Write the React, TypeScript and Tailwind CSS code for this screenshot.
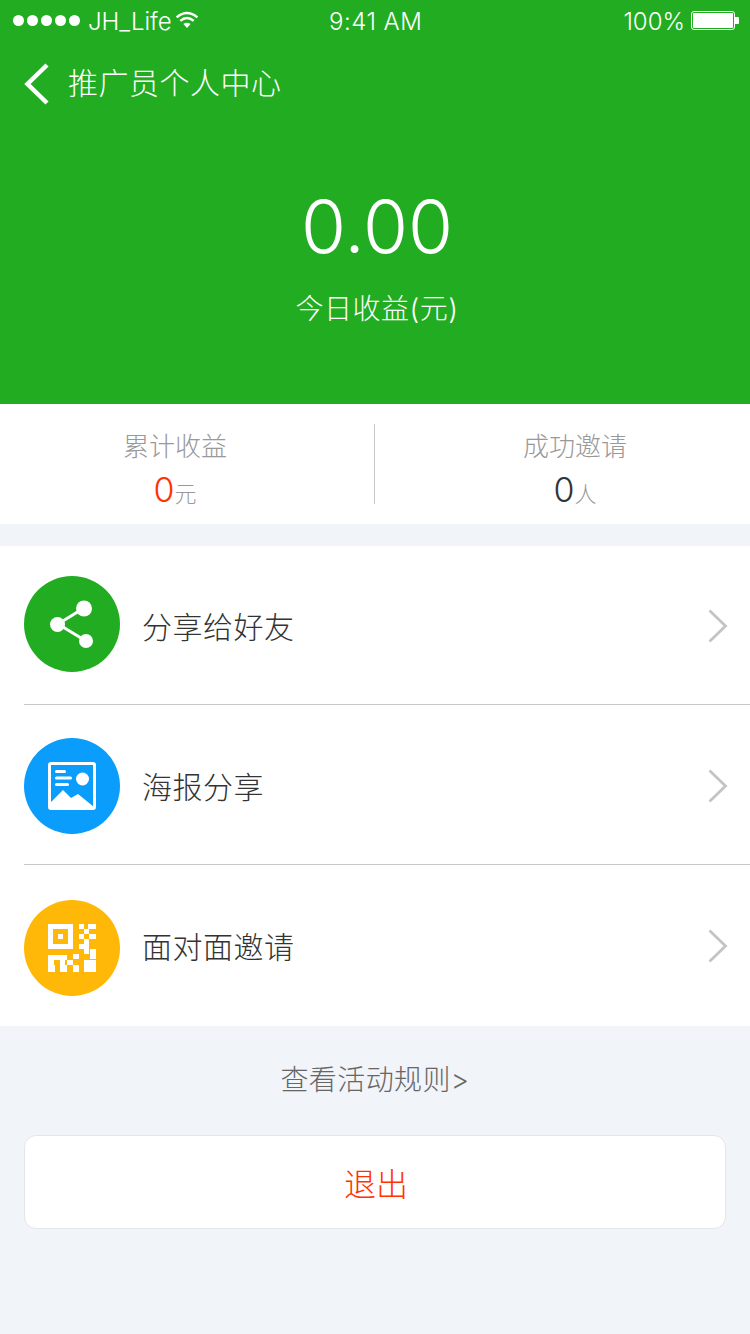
const font = "font-['Inter','Noto_Sans_CJK_SC',sans-serif]";

function ShareIcon() {
  return (
    <svg width="96" height="96" viewBox="0 0 96 96" fill="white" stroke="white">
      <path d="M34 48 L60 32 M34 48 L62 65" strokeWidth="3" />
      <circle cx="33.5" cy="48.5" r="7.5" stroke="none" />
      <circle cx="60" cy="32.5" r="8" stroke="none" />
      <circle cx="62" cy="65" r="7" stroke="none" />
    </svg>
  );
}

function PosterIcon() {
  return (
    <svg width="96" height="96" viewBox="0 0 96 96" fill="white">
      <rect x="25.5" y="25.5" width="45" height="45" rx="1.5" fill="none" stroke="white" strokeWidth="3" />
      <circle cx="58.5" cy="41" r="6.5" />
      <rect x="31" y="32" width="11" height="3" rx="1.5" />
      <rect x="31" y="38.5" width="17" height="3" rx="1.5" />
      <rect x="31" y="45" width="14" height="3" rx="1.5" />
      <path d="M26 70 V65 L39 52 L47 60 L54 56 L70 69 V70 Z" />
    </svg>
  );
}

const qrCells = [
  [55, 24, 5, 5], [64, 24, 8, 5], [60, 29, 5, 5], [55, 34, 5, 5], [65, 34, 7, 5],
  [60, 39, 5, 5], [55, 44, 10, 5], [60, 49, 5, 5], [66, 49, 6, 5], [49, 54, 6, 5], [66, 54, 6, 5],
  [24, 55, 19, 5], [24, 60, 6, 5], [36, 60, 5, 5], [43, 60, 6, 5],
  [24, 65, 7, 7], [36, 65, 7, 7], [49, 65, 6, 7], [60, 60, 12, 12],
];

function QrIcon() {
  return (
    <svg width="96" height="96" viewBox="0 0 96 96" fill="white">
      <path fillRule="evenodd" d="M24 24 H49 V49 H24 Z M29 29 V44 H44 V29 Z" />
      <rect x="34" y="34" width="5" height="5" />
      {qrCells.map(([x, y, w, h]) => (
        <rect key={`${x}-${y}`} x={x} y={y} width={w} height={h} />
      ))}
    </svg>
  );
}

const rows = [
  {
    label: '分享给好友', bg: 'bg-[#22ac22]', icon: <ShareIcon />,
    cls: 'pt-[30px] pb-[32px] border-b border-[#c8c8c8]', text: 'mt-[6px]', arrow: 'mt-[4px]',
  },
  {
    label: '海报分享', bg: 'bg-[#0a9dfb]', icon: <PosterIcon />,
    cls: 'pt-[33px] pb-[30px] border-b border-[#c8c8c8]', text: 'mt-[2px]', arrow: 'mt-0',
  },
  {
    label: '面对面邀请', bg: 'bg-[#ffb808]', icon: <QrIcon />,
    cls: 'pt-[35px] pb-[30px]', text: 'mb-[2px]', arrow: 'mb-[4px]',
  },
];

export default function App() {
  return (
    <div className={`${font} w-[750px] min-h-[1334px] bg-[#f1f4f9] font-light`}>
      {/* Header */}
      <div className="h-[404px] bg-[#22ac22] text-white">
        <div className="h-[40px] flex items-center pl-[13px] pr-[11px] text-[24px]">
          <div className="w-[316px] flex items-center">
            <div className="flex gap-[3px]">
              {[0, 1, 2, 3, 4].map((i) => (
                <span key={i} className="w-[11px] h-[11px] rounded-full bg-white" />
              ))}
            </div>
            <span className="ml-[8px] mt-[3px] leading-none">JH_Life</span>
            <svg className="ml-[2px] -mt-[1px]" width="26" height="18" viewBox="0 0 26 20" fill="none" stroke="white" strokeWidth="2.6">
              <path d="M1.5 7 Q13 -2.5 24.5 7" />
              <path d="M5.5 11 Q13 4.5 20.5 11" />
              <path d="M13 19 L9 14.5 Q13 11.5 17 14.5 Z" fill="white" stroke="none" />
            </svg>
          </div>
          <span className="mt-[3px] leading-none tracking-[0.5px]">9:41 AM</span>
          <div className="flex-1 flex items-center justify-end">
            <span className="mt-[3px] leading-none mr-[6px]">100%</span>
            <div className="w-[44px] h-[19px] border border-white rounded-[3px] p-[1px]">
              <div className="w-full h-full bg-white rounded-[1px]" />
            </div>
            <span className="w-[4px] h-[7px] bg-white rounded-r-[1px]" />
          </div>
        </div>
        <div className="h-[88px] flex items-center pl-[24px]">
          <svg width="26" height="42" viewBox="0 0 26 42" fill="none" stroke="white" strokeWidth="4.5">
            <path d="M23 2 L3.5 21 L23 40" />
          </svg>
          <span className="ml-[18px] mb-[2px] text-[30px] leading-none tracking-[0.5px]">推广员个人中心</span>
        </div>
        <div className="text-center text-[73px] leading-none mt-[62px] pl-[4px] font-light">0.00</div>
        <div className="text-center text-[28px] leading-none mt-[32px] pl-[4px] tracking-[0.5px]">今日收益(元)</div>
      </div>

      {/* Stats */}
      <div className="h-[120px] bg-white flex items-center">
        <div className="w-[374px] pr-[24px] pt-[12px] text-center">
          <div className="text-[26px] leading-none text-[#999999]">累计收益</div>
          <div className="mt-[13px] leading-none">
            <span className="text-[34px] text-[#ff3300]">0</span>
            <span className="text-[22px] text-[#999999]">元</span>
          </div>
        </div>
        <div className="w-px h-[80px] bg-[#c8c8c8]" />
        <div className="flex-1 pl-[25px] pt-[12px] text-center">
          <div className="text-[26px] leading-none text-[#999999]">成功邀请</div>
          <div className="mt-[13px] leading-none">
            <span className="text-[34px] text-[#333333]">0</span>
            <span className="text-[22px] text-[#999999]">人</span>
          </div>
        </div>
      </div>

      {/* Menu */}
      <div className="mt-[22px] bg-white pl-[24px]">
        {rows.map((row) => (
          <div key={row.label} className={`flex items-center ${row.cls}`}>
            <div className={`w-[96px] h-[96px] rounded-full shrink-0 ${row.bg}`}>{row.icon}</div>
            <span className={`ml-[22px] flex-1 text-[30px] leading-none tracking-[0.5px] text-[#333333] ${row.text}`}>{row.label}</span>
            <svg className={`mr-[22px] ${row.arrow}`} width="20" height="34" viewBox="0 0 20 34" fill="none" stroke="#c4c4c4" strokeWidth="2.8">
              <path d="M1.5 1.5 L17.5 17 L1.5 32.5" />
            </svg>
          </div>
        ))}
      </div>

      {/* Footer */}
      <div className="mt-[36px] text-center text-[28px] leading-[36px] tracking-[0.4px] text-[#666666]">查看活动规则&gt;</div>
      <div className="mx-[24px] mt-[37px] h-[94px] pt-[5px] pl-[2px] flex items-center justify-center rounded-[12px] bg-white border border-[#e3e5ea] text-[32px] text-[#ff3300]">
        退出
      </div>
    </div>
  );
}
